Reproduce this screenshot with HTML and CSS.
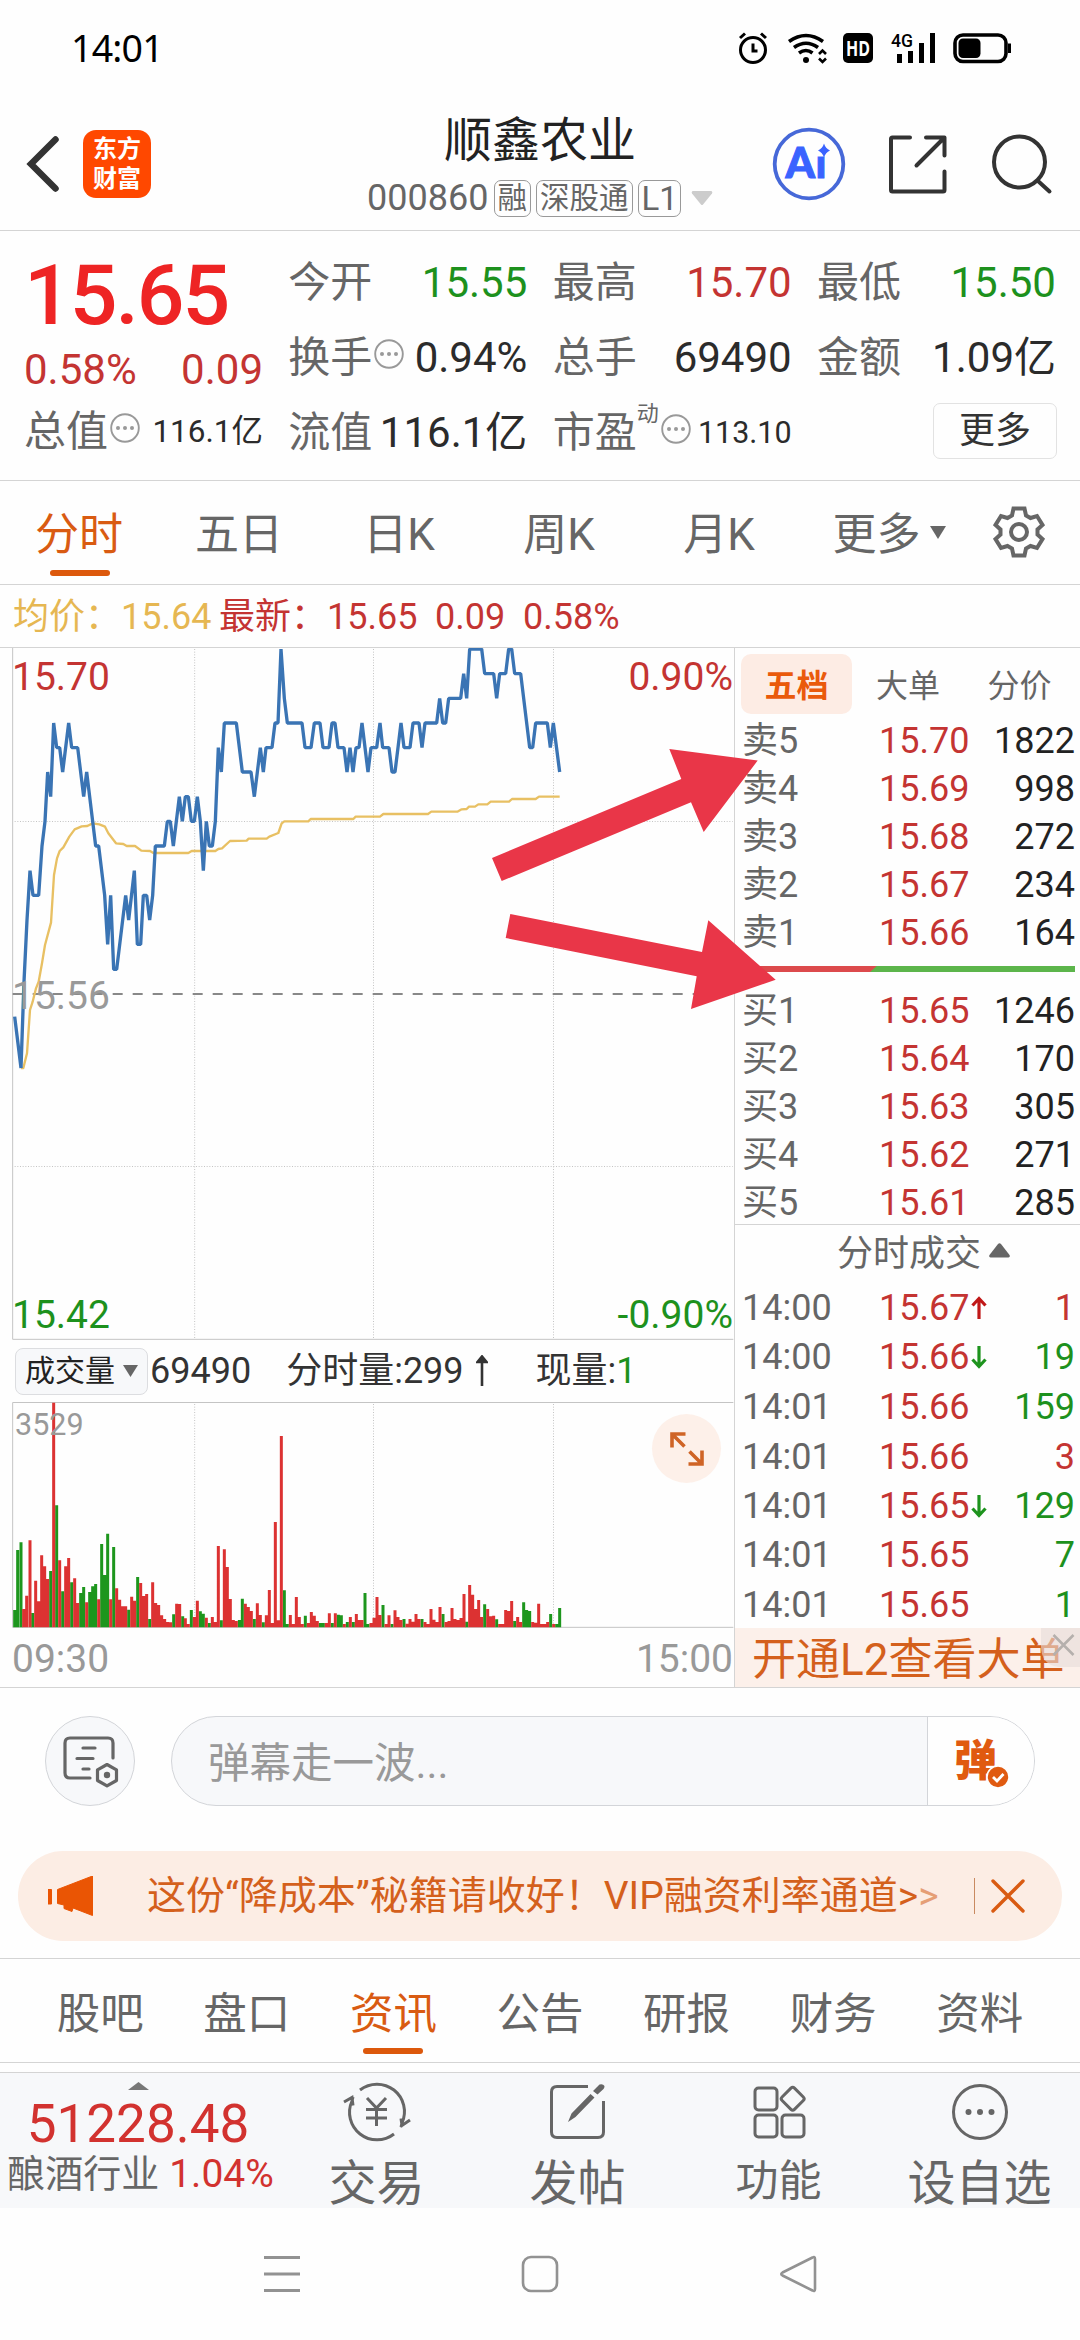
FILE: index.html
```html
<!DOCTYPE html>
<html lang="zh-CN">
<head>
<meta charset="utf-8">
<title>顺鑫农业 000860</title>
<link rel="stylesheet" href="styles.css">
</head>
<body>
<div class="phone">

<div class="status">
  <span class="clock">14:01</span>
  <svg width="280" height="36" viewBox="735 30 280 36" fill="none" stroke="#000">
    <circle cx="753" cy="50" r="12.5" stroke-width="3"/>
    <path d="M740 38l5-4.500M766 38l-5-4.500M753 43.500v7.500h4.500" stroke-width="3"/>
    <path d="M789 41.500q17-12 34 0M794 47.500q12-8.500 24 0M799 53q7-5 13.500 0" stroke-width="3.600"/>
    <circle cx="806" cy="60" r="3" fill="#000" stroke="none"/>
    <path d="M819 54l3.500-3.500 3.500 3.500M819 58.500l3.500 3.500 3.500-3.500" stroke-width="2.600"/>
    <rect x="843" y="33" width="30" height="30" rx="5" fill="#000" stroke="none"/>
    <text x="858" y="56" class="hd" textLength="24" lengthAdjust="spacingAndGlyphs">HD</text>
    <text x="891" y="47" class="net" textLength="22" lengthAdjust="spacingAndGlyphs">4G</text>
    <path d="M899.500 54v9M910.500 51v12M921.500 43v20M932.500 33v30" stroke-width="5"/>
    <rect x="955" y="35" width="51" height="26.500" rx="8" stroke-width="3.600"/>
    <rect x="958.500" y="38.500" width="22" height="19.500" rx="4.500" fill="#000" stroke="none"/>
    <path d="M1009.500 43.500v9.500" stroke-width="3"/>
  </svg>
</div>

<header class="header">
  <div class="header-left">
    <svg width="34" height="58" viewBox="26 135 34 58" fill="none" stroke="#333" stroke-width="6.500" stroke-linecap="round" stroke-linejoin="miter"><path d="M55.500 139.500L31 164l24.500 24.500"/></svg>
    <div class="logo"><span>东方</span><span>财富</span></div>
  </div>
  <div class="title">
    <h1>顺鑫农业</h1>
    <div class="code"><span class="num">000860</span><i>融</i><i>深股通</i><i>L1</i><svg width="22" height="15" viewBox="0 0 22 15"><path d="M1.500 0h19q1.500 1 .5 2.500l-9 11q-1 1-2 0l-9-11q-1-1.500.5-2.500z" fill="#ccc"/></svg></div>
  </div>
  <div class="header-right">
    <svg width="74" height="74" viewBox="771.500 126 74 74">
      <text y="177" class="ai"><tspan x="785">A</tspan><tspan x="815">i</tspan></text>
      <path d="M815 141h17v14.500h-17z" fill="#fefefe"/>
      <circle cx="808.500" cy="163" r="34.300" fill="none" stroke="#4668d8" stroke-width="3.800"/>
      <path d="M823.500 142.500q1.500 5 6 7-4.500 2-6 7-1.500-5-6-7 4.500-2 6-7z" fill="#3a63ff"/>
    </svg>
    <svg width="60" height="60" viewBox="887 133.500 60 60" fill="none" stroke="#333" stroke-width="4" stroke-linecap="round" stroke-linejoin="round"><path d="M909 137h-17.500q-1.500 0-1.500 1.500v51q0 1.500 1.500 1.500h50.500q1.500 0 1.500-1.500v-18.500M925 137h18.500v18M943 137.500L915.500 165"/></svg>
    <svg width="62" height="62" viewBox="990 132 62 62" fill="none" stroke="#333" stroke-width="4" stroke-linecap="round"><circle cx="1018.500" cy="161" r="25.500"/><path d="M1037 180l11.500 10.500"/></svg>
  </div>
</header>

<section class="quote">
  <div class="lead">
    <b class="price">15.65</b>
    <div class="change up"><span>0.58%</span><span>0.09</span></div>
    <div class="cell"><label>总值<svg class="dots"><use href="#more"/></svg></label><span class="small">116.1亿</span></div>
  </div>
  <div class="col">
    <div class="cell"><label>今开</label><span class="down">15.55</span></div>
    <div class="cell"><label>换手<svg class="dots"><use href="#more"/></svg></label><span>0.94%</span></div>
    <div class="cell"><label>流值</label><span>116.1亿</span></div>
  </div>
  <div class="col">
    <div class="cell"><label>最高</label><span class="up">15.70</span></div>
    <div class="cell"><label>总手</label><span>69490</span></div>
    <div class="cell"><label>市盈<sup>动</sup><svg class="dots"><use href="#more"/></svg></label><span class="small pe">113.10</span></div>
  </div>
  <div class="col">
    <div class="cell"><label>最低</label><span class="down">15.50</span></div>
    <div class="cell"><label>金额</label><span>1.09亿</span></div>
    <div class="cell end"><button class="more">更多</button></div>
  </div>
  <svg width="0" height="0" class="defs"><symbol id="more" viewBox="0 0 30 30"><circle cx="15" cy="15" r="13.800" fill="none" stroke="#999" stroke-width="1.900"/><circle cx="8" cy="15" r="2" fill="#999"/><circle cx="15" cy="15" r="2" fill="#999"/><circle cx="22" cy="15" r="2" fill="#999"/></symbol></svg>
</section>

<nav class="periods">
  <span class="on">分时</span><span>五日</span><span>日K</span><span>周K</span><span>月K</span>
  <span class="drop">更多<svg width="16" height="14" viewBox="0 0 16 14"><path d="M0 0h16L8 13z" fill="#666"/></svg></span>
  <span class="gear"><svg width="54" height="54" viewBox="-27 -27 54 54" fill="none" stroke="#666" stroke-width="4" stroke-linejoin="miter"><path d="M-5.500-23.500H5.500L7-16.500 11.500-14 18-16 23.500-7 18.500-2.500V2.500L23.500 7 18 16 11.500 14 7 16.500 5.500 23.500H-5.500L-7 16.500-11.500 14-18 16-23.500 7-18.500 2.500V-2.500L-23.500-7-18-16-11.500-14-7-16.500z"/><circle r="8"/></svg></span>
</nav>

<div class="info"><span class="avg">均价：15.64</span><span class="up">最新：</span><span class="up v1">15.65</span><span class="up v2">0.09</span><span class="up v3">0.58%</span></div>

<main class="market">
  <div class="charts">
    <div class="chart">
      <svg width="734" height="692" viewBox="0 54 2202 2076" fill="none">
        <g stroke="#c4c4c4" stroke-width="3">
          <path d="M38 54V2128H2200"/>
          <g stroke-dasharray="3 5"><path d="M584 57V2126M1120.500 57V2126M1660.500 57V2126M44 574.500H2198M44 1609.500H2198"/></g>
        </g>
        <path d="M38 1092H2196" stroke="#888" stroke-width="6" stroke-dasharray="30 30"/>
        <polyline class="avg-line" points="63,1314 70,1314 81,1270 90,1140 98,1115 108,1075 116,1055 126,1000 135,945 153,878 162,735 171,685 179,663 190,652 208,620 224,598 245,589 262,588 278,580 298,583 315,590 325,610 348,640 370,642 380,648 405,648 424,662 450,663 460,669 565,669 575,663 646,663 655,657 666,655 690,633 740,632 746,626 800,626 808,620 835,609 845,580 853,574 925,574 932,567 1060,567 1067,560 1140,560 1150,552 1284,552 1294,545 1372,545 1385,538 1400,537 1407,530 1425,530 1435,523 1462,523 1472,515 1527,515 1536,507 1607,507 1617,500 1679,500"/>
        <polyline class="price-line" points="44,1160 63,1314 72,1055 81,870 90,722 99,796 116,796 126,648 135,574 143,426 152,500 161,279 170,353 179,353 188,426 206,279 215,353 233,353 251,500 260,426 278,574 287,648 296,648 314,796 323,943 332,796 341,1018 350,1018 377,796 386,870 403,722 412,943 422,943 430,796 440,796 449,870 458,796 466,648 493,648 502,574 511,574 520,648 538,500 547,574 556,500 565,500 574,574 583,574 592,500 601,574 610,722 619,574 628,648 637,648 646,574 655,353 664,426 673,279 709,279 727,426 753,426 763,500 781,353 790,426 798,353 816,353 825,279 834,279 843,57 853,205 862,279 906,279 915,353 933,353 943,279 960,279 969,353 987,353 996,279 1005,279 1014,353 1032,353 1041,426 1050,353 1059,426 1068,353 1077,353 1086,279 1104,426 1113,353 1130,353 1140,279 1148,353 1167,353 1176,426 1185,426 1194,353 1203,279 1212,353 1230,353 1239,279 1257,279 1266,353 1275,279 1310,279 1319,205 1328,279 1337,279 1346,205 1382,205 1391,131 1400,205 1409,57 1445,57 1454,131 1481,131 1490,205 1499,131 1517,131 1526,57 1535,57 1544,131 1562,131 1571,205 1589,353 1598,353 1607,279 1642,279 1651,353 1660,279 1679,426"/>
      </svg>
      <span class="tag t-hi up">15.70</span><span class="tag t-hip up">0.90%</span>
      <span class="tag t-mid">15.56</span>
      <span class="tag t-lo down">15.42</span><span class="tag t-lop down">-0.90%</span>
    </div>
    <div class="vol-info">
      <button class="vol-btn">成交量<svg width="15" height="12" viewBox="0 0 15 12"><path d="M0 0h15L7.500 12z" fill="#666"/></svg></button>
      <span>69490</span><span class="w1">分时量:299</span>
      <svg class="w2" width="12" height="32" viewBox="0 0 12 32"><path d="M6 31V3M1.500 7L6 1.500 10.500 7z" fill="#333" stroke="#333" stroke-width="2.600"/></svg>
      <span class="w3">现量:<em class="down">1</em></span>
    </div>
    <div class="vol">
      <svg width="734" height="226" viewBox="0 336 2202 678" fill="none">
        <g stroke="#c4c4c4" stroke-width="3">
          <path d="M2200 337.500H38V1012H2200"/>
          <path d="M584 342V1010M1120.500 342V1010M1660.500 342V1010" stroke-dasharray="3 5"/>
        </g>
        <path class="bar-g" d="M44 1012V960M53 1012V780M63 1012V757M98 1012V969M152 1012V843M170 1012V646M188 1012V904M215 1012V877M242 1012V909M251 1012V891M269 1012V906M278 1012V889M287 1012V882M305 1012V762M314 1012V855M323 1012V731M341 1012V771M386 1012V959M413 1012V861M449 1012V987M521 1012V973M548 1012V979M574 1012V960M601 1012V964M610 1012V971M628 1012V999M664 1012V991M718 1012V990M727 1012V926M763 1012V987M790 1012V997M853 1012V901M862 1012V1002M916 1012V977M961 1012V999M970 1012V999M997 1012V999M1015 1012V974M1024 1012V976M1042 1012V996M1060 1012V996M1095 1012V909M1104 1012V1002M1149 1012V945M1176 1012V1002M1212 1012V987M1266 1012V987M1329 1012V972M1400 1012V995M1454 1012V943M1490 1012V988M1544 1012V993M1571 1012V937M1580 1012V960M1589 1012V963M1652 1012V972M1670 1012V1002M1679 1012V954"/>
        <path class="bar-r" d="M71 1012V957M80 1012V917M90 1012V751M107 1012V872M116 1012V934M125 1012V796M134 1012V829M143 1012V867M161 1012V338M179 1012V811M197 1012V829M206 1012V804M224 1012V865M233 1012V939M260 1012V937M296 1012V928M332 1012V928M350 1012V895M359 1012V929M368 1012V949M377 1012V949M395 1012V920M404 1012V932M422 1012V879M431 1012V918M440 1012V912M458 1012V877M467 1012V939M476 1012V945M485 1012V976M494 1012V987M503 1012V996M512 1012V997M530 1012V941M539 1012V942M556 1012V985M565 1012V1002M583 1012V981M592 1012V932M619 1012V983M637 1012V981M646 1012V996M655 1012V768M673 1012V778M682 1012V831M691 1012V927M700 1012V990M709 1012V993M736 1012V941M745 1012V951M754 1012V963M772 1012V940M781 1012V975M799 1012V976M808 1012V900M817 1012V999M826 1012V696M835 1012V991M844 1012V438M871 1012V975M880 1012V1002M889 1012V921M898 1012V981M907 1012V1002M925 1012V999M934 1012V966M943 1012V977M952 1012V993M979 1012V999M988 1012V970M1006 1012V970M1033 1012V1002M1051 1012V981M1069 1012V972M1077 1012V990M1086 1012V990M1113 1012V999M1122 1012V983M1131 1012V921M1140 1012V975M1158 1012V1002M1167 1012V976M1185 1012V961M1194 1012V981M1203 1012V990M1221 1012V1001M1230 1012V987M1239 1012V995M1248 1012V972M1257 1012V987M1275 1012V996M1284 1012V1002M1293 1012V957M1302 1012V989M1311 1012V996M1320 1012V951M1338 1012V996M1347 1012V993M1356 1012V954M1365 1012V987M1374 1012V990M1383 1012V984M1392 1012V912M1409 1012V885M1418 1012V914M1427 1012V957M1436 1012V930M1445 1012V981M1463 1012V957M1472 1012V979M1481 1012V977M1499 1012V1002M1508 1012V1002M1517 1012V960M1526 1012V963M1535 1012V933M1553 1012V981M1562 1012V996M1598 1012V996M1607 1012V998M1616 1012V941M1625 1012V1002M1634 1012V1002M1643 1012V996M1661 1012V1002"/>
      </svg>
      <span class="tag t-vol">3529</span>
      <div class="expand"><svg width="34" height="34" viewBox="0 0 34 34" fill="none" stroke="#cf6426" stroke-width="3.600"><path d="M15.500 2H2v13.500M2 2l12.500 12.500M18.500 32H32V18.500M32 32L19.500 19.500"/></svg></div>
    </div>
    <div class="hours"><span>09:30</span><span>15:00</span></div>
  </div>

  <aside class="book">
    <div class="book-tabs"><b>五档</b><span>大单</span><span>分价</span></div>
    <div class="row"><label>卖5</label><span class="up">15.70</span><span>1822</span></div>
    <div class="row"><label>卖4</label><span class="up">15.69</span><span>998</span></div>
    <div class="row"><label>卖3</label><span class="up">15.68</span><span>272</span></div>
    <div class="row"><label>卖2</label><span class="up">15.67</span><span>234</span></div>
    <div class="row"><label>卖1</label><span class="up">15.66</span><span>164</span></div>
    <div class="ratio"></div>
    <div class="row"><label>买1</label><span class="up">15.65</span><span>1246</span></div>
    <div class="row"><label>买2</label><span class="up">15.64</span><span>170</span></div>
    <div class="row"><label>买3</label><span class="up">15.63</span><span>305</span></div>
    <div class="row"><label>买4</label><span class="up">15.62</span><span>271</span></div>
    <div class="row last"><label>买5</label><span class="up">15.61</span><span>285</span></div>
    <div class="deals-title">分时成交<svg width="21" height="15" viewBox="0 0 21 15"><path d="M9 1q1.500-1.500 3 0l8.500 11q1 2-1 2.500H1.500q-2-.5-1-2.500z" fill="#666"/></svg></div>
    <div class="row deal"><label>14:00</label><span class="up">15.67<svg class="arr"><use href="#arrow" transform="rotate(180 8 12)" stroke="#c01818"/></svg></span><span class="up">1</span></div>
    <div class="row deal"><label>14:00</label><span class="up">15.66<svg class="arr"><use href="#arrow" stroke="#1d931d"/></svg></span><span class="down">19</span></div>
    <div class="row deal"><label>14:01</label><span class="up">15.66</span><span class="down">159</span></div>
    <div class="row deal"><label>14:01</label><span class="up">15.66</span><span class="up">3</span></div>
    <div class="row deal"><label>14:01</label><span class="up">15.65<svg class="arr"><use href="#arrow" stroke="#1d931d"/></svg></span><span class="down">129</span></div>
    <div class="row deal"><label>14:01</label><span class="up">15.65</span><span class="down">7</span></div>
    <div class="row deal"><label>14:01</label><span class="up">15.65</span><span class="down">1</span></div>
    <div class="level2">开通L2查看大单<svg class="l2-close" width="39" height="39" viewBox="0 0 39 39"><path d="M0 0h39v39H18Q0 37 0 18z" fill="#e6dcd8" opacity=".6"/><path d="M12.500 7l20 20M32.500 7l-20 20" stroke="#b5b0ad" stroke-width="2.600" fill="none"/></svg></div>
  </aside>
  <svg width="0" height="0" class="defs"><symbol id="arrow" viewBox="0 0 16 24" overflow="visible"><path d="M8 1v20M1.500 14.500L8 21.500l6.500-7" fill="none" stroke-width="3.200"/></symbol></svg>
</main>

<div class="danmu">
  <div class="round"><svg width="58" height="54" viewBox="62 1735 58 54" fill="none" stroke="#666" stroke-width="3.200" stroke-linecap="round"><path d="M114 1759v-15q0-5-5-5H71q-5 0-5 5v30q0 5 5 5h20"/><path d="M84 1749h12M78 1759.500h16M84 1770h6"/><path d="M108 1765.500l9.500 5.300v10.700l-9.500 5.300-9.500-5.300v-10.700z" stroke-linejoin="round"/><circle cx="108" cy="1776" r="3.200" fill="#666" stroke="none"/></svg></div>
  <div class="field"><span>弹幕走一波...</span><div class="send"><b>弹</b><svg class="check" width="24" height="24" viewBox="0 0 24 24"><circle cx="12" cy="12" r="11" fill="#e05a10" stroke="#fefefe" stroke-width="1.600"/><path d="M7 12l4 4 6.500-7" fill="none" stroke="#fff" stroke-width="2.800"/></svg></div></div>
</div>

<div class="promo">
  <svg width="46" height="40" viewBox="48 1876 46 40"><path d="M48 1889.500h3.500v14.500H48zM57.500 1889.500L92.500 1876v39.500L73 1908l-1 3.500-8-3v-3.500l-6.500-1.500z" fill="#ea5504" stroke="#ea5504" stroke-linejoin="round"/></svg>
  <span>这份“降成本”秘籍请收好！VIP融资利率通道<s>&gt;</s><s class="dim">&gt;</s></span>
  <i></i>
  <svg width="34" height="34" viewBox="0 0 34 34" stroke="#d95b12" stroke-width="3.400" stroke-linecap="round"><path d="M2 2l30 30M32 2L2 32"/></svg>
</div>

<nav class="sections"><span>股吧</span><span>盘口</span><span class="on">资讯</span><span>公告</span><span>研报</span><span>财务</span><span>资料</span></nav>

<footer class="toolbar">
  <div class="index"><svg width="21" height="8" viewBox="0 0 21 8"><path d="M10.500 0L21 8H0z" fill="#777"/></svg><strong>51228.48</strong><div>酿酒行业<em>1.04%</em></div></div>
  <div class="tool"><svg width="68" height="60" viewBox="342 2082 68 60" fill="none" stroke="#666" stroke-width="3"><path d="M359 2090a27.500 27.500 0 0 1 42 33l-1 4M409 2120l-8 5.500-1-7M393 2134a27.500 27.500 0 0 1-42-33l1-4M343 2102l8-4.500 1 8"/><path d="M366 2098l9.500 10 9.500-10M375.500 2108v18M365 2109.500h21M365 2118h21"/></svg><span>交易</span></div>
  <div class="tool"><svg width="58" height="60" viewBox="549 2082 58 60" fill="none" stroke="#666" stroke-width="3"><path d="M588 2086.500h-31q-5.500 0-5.500 5.500v40q0 5.500 5.500 5.500h41q5.500 0 5.500-5.500v-31"/><path d="M568 2122l3.500-8.500 19-19.500 4 3.500-19 19.500zM593 2091l6.500-6.500q3.500-1 5 1.500 0 2-1 3l-6 5.500z" fill="#666" stroke="none"/></svg><span>发帖</span></div>
  <div class="tool"><svg width="56" height="60" viewBox="750 2082 56 60" fill="none" stroke="#666" stroke-width="3" stroke-linejoin="round"><rect x="754" y="2088" width="22" height="22" rx="3.500"/><rect x="754" y="2115" width="22" height="22" rx="3.500"/><rect x="781" y="2115" width="22" height="22" rx="3.500"/><rect x="783" y="2090" width="17.500" height="17.500" rx="2.500" transform="rotate(45 791.700 2098.700)"/></svg><span class="s43">功能</span></div>
  <div class="tool"><svg width="60" height="60" viewBox="949 2082 60 60"><circle cx="979" cy="2112" r="26.500" fill="none" stroke="#666" stroke-width="3"/><g fill="#666"><circle cx="967.500" cy="2112" r="3"/><circle cx="979" cy="2112" r="3"/><circle cx="990.500" cy="2112" r="3"/></g></svg><span>设自选</span></div>
</footer>

<div class="sysnav">
  <svg width="38" height="38" viewBox="0 0 38 38" stroke="#929292" stroke-width="3"><path d="M1 2.500h36M1 19h36M1 35.500h36"/></svg>
  <svg width="38" height="38" viewBox="0 0 38 38" fill="none" stroke="#929292" stroke-width="2.600"><rect x="2" y="2" width="34" height="34" rx="8"/></svg>
  <svg width="38" height="38" viewBox="0 0 38 38" fill="none" stroke="#929292" stroke-width="2.600" stroke-linejoin="round"><path d="M33.500 2.500Q36 1 36 4v30q0 3-2.500 1.500L3.500 20.500q-2.500-1.500 0-3z"/></svg>
</div>

<svg class="callouts" width="300" height="280" viewBox="485 740 300 280" fill="#e93648">
  <path d="M492 858L681.300 779 669.300 749 757.700 760.500 703.700 832 691 802.300 501.700 881z"/>
  <path d="M510.300 914L702 952 708.300 920.300 775.700 979.800 691 1009 696.700 976.300 505.700 938z"/>
</svg>
</div>
</body>
</html>
```
FILE: styles.css
```css
* { box-sizing: border-box; margin: 0; padding: 0; }
body { background: #fefefe; color: #333; font-family: Roboto, "Noto Sans CJK SC", sans-serif; }
svg { display: block; flex: none; }
i, em, s { font-style: normal; text-decoration: none; }
button { font: inherit; color: #333; }
.defs { position: absolute; }
.phone { position: relative; width: 1080px; height: 2340px; overflow: hidden; display: flex; flex-direction: column; }
.phone > * { flex: none; }
.up { color: #c43432; }
.down { color: #1d911d; }

.status { height: 65px; padding: 0 65px 0 71px; display: flex; justify-content: space-between; align-items: flex-start; }
.status svg { margin-top: 30px; }
.clock { font: 37.500px/95px "Noto Sans", sans-serif; color: #000; letter-spacing: -.8px; }
.hd { font: bold 22px "Open Sans", sans-serif; fill: #fff; stroke: none; text-anchor: middle; }
.net { font: 500 19px Roboto, sans-serif; fill: #000; stroke: none; }

.header { height: 166px; border-bottom: 1px solid #d4d4d4; display: grid; grid-template-columns: 1fr auto 1fr; }
.header-left { display: flex; align-items: center; padding: 0 0 0 26px; height: 197px; }
.logo { width: 68px; height: 68px; margin-left: 23px; border-radius: 13px; background: #ff4800; color: #fff; font-size: 24px; line-height: 28px; font-weight: 700; display: flex; flex-direction: column; align-items: center; justify-content: center; gap: 2px; }
.title { display: flex; flex-direction: column; align-items: center; padding-top: 44px; }
h1 { font-size: 48px; font-weight: 400; line-height: 64px; color: #222; }
.code { display: flex; align-items: center; height: 50px; color: #666; font-size: 36px; line-height: 38px; }
.code i { height: 37px; border: 1.500px solid #999; border-radius: 7px; padding: 0 3px; margin-left: 5px; font-size: 29.500px; line-height: 35px; }
.code i:last-of-type { font-size: 33px; padding: 0 2px 0 3px; }
.code svg { margin-left: 10px; }
.header-right { display: flex; align-items: center; justify-content: flex-end; height: 197px; padding-right: 27px; gap: 42px; }
.header-right svg + svg + svg { margin-left: 1px; }
.ai { font: 900 42px Lato, sans-serif; fill: #3a63ff; stroke: #3a63ff; stroke-width: 1; }

.quote { height: 250px; border-bottom: 1px solid #d4d4d4; padding: 14px 24px 0; display: grid; grid-template-columns: repeat(4, 239px); justify-content: space-between; font-size: 42px; }
.price { display: block; height: 99px; line-height: 102px; font-size: 84px; font-weight: 500; letter-spacing: -2px; color: #ee2424; }
.change { display: flex; justify-content: space-between; height: 50px; line-height: 51px; font-size: 42px; }
.cell { height: 75px; line-height: 76px; display: flex; justify-content: space-between; align-items: center; white-space: nowrap; }
.cell label { color: #666; display: flex; align-items: center; }
.cell span { color: #2b2b2b; font-size: 42px; }
.cell .small { font-size: 31.500px; padding-top: 1px; }
.cell .pe { font-size: 30.500px; }
.cell .up { color: #c43432; }
.cell .down { color: #1d911d; }
.dots { width: 30px; height: 30px; margin: -7px 0 0 2px; }
sup { font-size: 22px; line-height: 24px; margin: -38px 0 0 0; width: 22px; }
.cell.end { justify-content: flex-end; }
.more { width: 124px; height: 56px; margin: -4px -1px 0 0; border: 1.500px solid #e2e2e2; border-radius: 7px; background: none; font-size: 36px; line-height: 50px; }

.periods { height: 104px; border-bottom: 1px solid #d4d4d4; display: grid; grid-template-columns: repeat(6, 160px) 120px; grid-template-rows: 103px; font-size: 44px; line-height: 108px; color: #666; }
.periods span { position: relative; height: 103px; display: flex; justify-content: center; align-items: flex-start; padding-right: 2px; }
.periods .drop { padding-left: 20px; }
.drop svg { margin: 45px 0 0 9px; }
.gear svg { margin-top: 24px; }
.on { color: #d95b12; }
.on::after { content: ""; position: absolute; left: 50%; bottom: 8px; width: 60px; height: 6px; margin-left: -30px; border-radius: 3px; background: #dc580c; }

.info { height: 63px; border-bottom: 1px solid #d4d4d4; display: flex; padding-left: 13px; font-size: 36px; line-height: 65px; white-space: nowrap; }
.avg { color: #e6b752; width: 206px; }
.v1 { width: 108px; }
.v2 { width: 88px; }

.market { height: 1040px; border-bottom: 1px solid #d4d4d4; display: grid; grid-template-columns: 734px 346px; }
.chart { position: relative; height: 692px; }
.avg-line { stroke: #e8c063; stroke-width: 7; stroke-linejoin: round; }
.price-line { stroke: #3a74b4; stroke-width: 10; stroke-linejoin: bevel; }
.tag { position: absolute; font-size: 39px; line-height: 40px; }
.t-hi { left: 12px; top: 9px; }
.t-hip { right: 1px; top: 9px; }
.t-mid { left: 12px; top: 328px; color: #999; }
.t-lo { left: 12px; bottom: 5px; }
.t-lop { right: 1px; bottom: 5px; }
.vol-info { height: 62px; padding-left: 15px; display: flex; align-items: center; font-size: 36px; line-height: 62px; white-space: nowrap; }
.vol-btn { width: 133px; height: 47px; margin-right: 2px; border: 1px solid #dcdde0; border-radius: 8px; background: #f7f8fa; display: flex; align-items: center; padding-left: 9px; gap: 8px; font-size: 30px; line-height: 46px; color: #222; }
.w1 { margin-left: 35px; }
.w2 { margin-left: 12px; }
.w3 { margin-left: 48px; }
.vol { position: relative; height: 226px; }
.bar-g { stroke: #1d961d; stroke-width: 9; }
.bar-r { stroke: #dc3232; stroke-width: 9; }
.t-vol { left: 15px; top: 3px; font-size: 30.500px; color: #999; }
.expand { position: absolute; right: 13px; top: 12px; width: 69px; height: 69px; border-radius: 50%; background: #fdf0e9; display: grid; place-items: center; }
.hours { height: 59px; line-height: 62px; padding: 0 1px 0 12px; display: flex; justify-content: space-between; font-size: 39px; color: #999; }

.book { border-left: 1px solid #d4d4d4; font-size: 36px; }
.book-tabs { height: 68px; padding: 6px 0 0 6px; display: grid; grid-template-columns: 111px 112px 111px; text-align: center; font-size: 32px; line-height: 64px; color: #666; }
.book-tabs b { height: 60px; border-radius: 10px; background: #fdece4; color: #ea5a0c; }
.row { height: 48px; line-height: 50px; padding: 0 5px 0 7px; display: grid; grid-template-columns: 137px 100px 1fr; white-space: nowrap; color: #222; }
.row > :last-child { text-align: right; }
.row label { color: #666; }
.row .up { color: #c43432; }
.row .down { color: #1d911d; }
.ratio { height: 6px; margin: 10px 5px 14px 6px; background: linear-gradient(137deg, #dc4a4c 0 92px, #5cb54b 93px); }
.row.last { height: 47px; border-bottom: 1px solid #d4d4d4; }
.deals-title { height: 58px; line-height: 61px; padding-left: 102px; color: #666; display: flex; align-items: center; gap: 8px; }
.deals-title svg { margin-top: -8px; }
.row.deal { height: 49.300px; line-height: 51px; }
.row.deal:nth-last-child(-n+5) { line-height: 53px; }
.row.deal span:nth-child(2) { display: flex; align-items: center; }
.arr { width: 16px; height: 24px; overflow: visible; margin: -1px 0 0 2px; }
.level2 { position: relative; height: 59px; background: #fcf0ea; color: #d4601c; font-size: 44px; line-height: 65px; padding-left: 17px; white-space: nowrap; }
.l2-close { position: absolute; right: 0; top: 0; }

.danmu { height: 163px; padding: 28px 45px 0; display: flex; justify-content: space-between; }
.round { width: 90px; height: 90px; border: 1.500px solid #d3d5d9; border-radius: 50%; background: #f7f8fa; display: grid; place-items: center; }
.field { width: 864px; height: 90px; border: 1.500px solid #d3d5d9; border-radius: 45px; background: #f7f8fa; overflow: hidden; display: flex; justify-content: space-between; padding-left: 36px; font-size: 41.500px; line-height: 93px; color: #999; }
.send { position: relative; width: 107px; background: #fefefe; border-left: 1.500px solid #d3d5d9; padding-left: 26px; color: #e05a10; line-height: 88px; font-size: 43px; }
.send b { font-weight: 900; }
.check { position: absolute; left: 58px; top: 48px; }

.promo { height: 90px; margin: 0 18px 17px; padding: 0 37px 0 30px; border-radius: 45px; background: #fcede4; display: flex; align-items: center; font-size: 39px; line-height: 88px; color: #d4601c; white-space: nowrap; }
.promo span { margin-left: 53px; width: 827px; }
.dim { opacity: .55; }
.promo i { width: 1.500px; height: 36px; background: #c98a60; margin-right: 16px; }

.sections { height: 105px; margin-bottom: 9px; border: solid #d4d4d4; border-width: 1px 0; padding: 0 27px; display: grid; grid-template-columns: repeat(7, 1fr); grid-template-rows: 103px; text-align: center; font-size: 43.500px; line-height: 111px; color: #666; }
.sections span { position: relative; height: 103px; }

.toolbar { height: 136px; border-top: 1px solid #d4d4d4; background: #f7f8fa; display: grid; grid-template-columns: 276px 201px 201px 201px 201px; color: #666; }
.index { padding-top: 9px; display: flex; flex-direction: column; align-items: center; white-space: nowrap; }
.index strong { font-size: 53px; font-weight: 400; line-height: 68px; color: #d2322f; }
.index div { font-size: 38px; line-height: 33px; margin-left: 5px; }
.index em { color: #d2322f; font-size: 39px; margin-left: 10px; }
.tool { padding-top: 9px; display: flex; flex-direction: column; align-items: center; font-size: 48px; line-height: 84px; }
.tool .s43 { font-size: 43px; line-height: 78px; }

.sysnav { height: 132px; padding: 0 263px; display: flex; justify-content: space-between; align-items: center; }
.callouts { position: absolute; left: 485px; top: 740px; }
```
